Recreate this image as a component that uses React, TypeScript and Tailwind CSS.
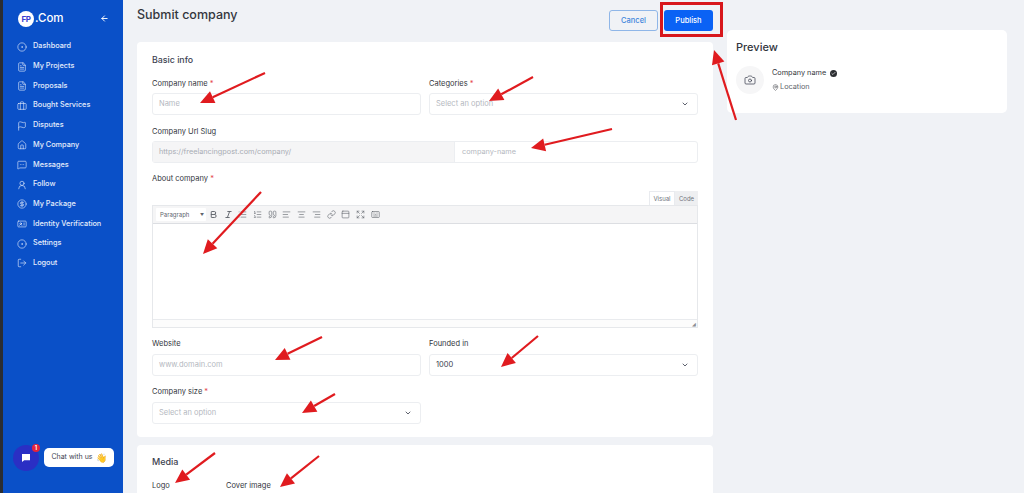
import {
  AlignCenter,
  AlignLeft,
  AlignRight,
  ArrowLeft,
  Bold,
  Briefcase,
  Camera,
  ChevronDown,
  Expand,
  FileText,
  Flag,
  House,
  Italic,
  Keyboard,
  Link,
  List,
  ListOrdered,
  LogOut,
  MapPin,
  MessageSquareMore,
  PanelTop,
  Quote,
  CircleDollarSign,
  CircleDot,
  UserRound,
  IdCard,
  Check,
} from "lucide-react";

const navItems = [
  { label: "Dashboard", icon: CircleDot },
  { label: "My Projects", icon: FileText },
  { label: "Proposals", icon: FileText },
  { label: "Bought Services", icon: Briefcase },
  { label: "Disputes", icon: Flag },
  { label: "My Company", icon: House },
  { label: "Messages", icon: MessageSquareMore },
  { label: "Follow", icon: UserRound },
  { label: "My Package", icon: CircleDollarSign },
  { label: "Identity Verification", icon: IdCard },
  { label: "Settings", icon: CircleDot },
  { label: "Logout", icon: LogOut },
];

const toolbarIcons = [Bold, Italic, List, ListOrdered, Quote, AlignLeft, AlignCenter, AlignRight, Link, PanelTop, Expand, Keyboard];

// red annotation arrows drawn over the screenshot: [tail x, tail y, tip x, tip y]
const arrows = [
  [265, 73, 200, 103],
  [533, 77, 489, 101],
  [612, 129, 531, 148],
  [261, 192, 203, 254],
  [322, 337, 275, 360],
  [538, 336, 501, 367],
  [335, 394, 302, 413],
  [215, 453, 175, 483],
  [319, 456, 280, 487],
  [736, 120, 714, 50],
];

function Arrow({ from }: { from: number[] }) {
  const [x1, y1, x2, y2] = from;
  const len = Math.hypot(x2 - x1, y2 - y1);
  const ux = (x2 - x1) / len;
  const uy = (y2 - y1) / len;
  const bx = x2 - ux * 14;
  const by = y2 - uy * 14;
  const points = `${x2},${y2} ${bx - uy * 6.5},${by + ux * 6.5} ${bx + uy * 6.5},${by - ux * 6.5}`;
  return (
    <g>
      <line x1={x1} y1={y1} x2={bx} y2={by} stroke="#e01b1f" strokeWidth="2.2" />
      <polygon points={points} fill="#e01b1f" />
    </g>
  );
}

function Label({ text, required }: { text: string; required?: boolean }) {
  return (
    <div className="text-[7.5px] leading-[10px] font-normal text-[#33363d]">
      {text}
      {required && <span className="text-[#e5484d]"> *</span>}
    </div>
  );
}

function Field({ placeholder, value, select }: { placeholder?: string; value?: string; select?: boolean }) {
  return (
    <div className="flex h-[22px] items-center justify-between rounded-[3px] border border-[#eceef1] bg-white pr-2 pl-[6px] text-[7.5px]">
      <span className={value ? "text-[#3d4250]" : "text-[#b4b8c0]"}>{value || placeholder}</span>
      {select && <ChevronDown size={8} strokeWidth={2.5} className="text-[#3d4250]" />}
    </div>
  );
}

export default function App() {
  return (
    <div className="relative flex h-[493px] w-[1024px] overflow-hidden bg-[#f0f2f6] font-['Inter',sans-serif]">
      <div className="w-[3px] bg-[#2b2d31]" />

      <aside className="w-[120px] shrink-0 bg-[#0a50c8] text-white">
        <div className="flex h-[37px] items-center pr-[14px] pl-[15px]">
          <div className="flex h-4 w-4 items-center justify-center rounded-full bg-white text-[8px] font-bold tracking-tighter text-[#3a3fd0]">
            FP
          </div>
          <span className="ml-[1px] text-[11.5px] font-medium">.Com</span>
          <ArrowLeft size={9} strokeWidth={2.5} className="ml-auto" />
        </div>
        <nav className="flex flex-col">
          {navItems.map((item) => (
            <div key={item.label} className="flex h-[19.7px] items-center pl-[14px] text-[7.3px] font-medium text-[#e4ecfb]">
              <item.icon size={10} strokeWidth={1.5} />
              <span className="ml-[6px]">{item.label}</span>
            </div>
          ))}
        </nav>
      </aside>

      <main className="flex min-w-0 flex-1 pl-[14px]">
        <div className="w-[576px] shrink-0">
          <div className="flex h-[42px] justify-between">
            <h1 className="pt-[5px] text-[12.5px] leading-[20px] font-medium text-[#33363d]">Submit company</h1>
            <div className="flex gap-[6px] pt-[10px]">
              <button className="h-[21px] w-[49px] rounded-[3px] border border-[#8fb6e8] text-[7.5px] font-medium text-[#3f86dc]">Cancel</button>
              <button className="h-[21px] w-[49px] rounded-[3px] bg-[#0a62f5] text-[7.5px] font-medium text-white">Publish</button>
            </div>
          </div>

          <section className="h-[395px] rounded-[4px] bg-white px-[15px] pt-[12px]">
            <h2 className="text-[8.8px] leading-[11px] font-medium text-[#3d4250]">Basic info</h2>

            <div className="mt-[14px] grid grid-cols-[269px_269px] gap-x-2">
              <div>
                <Label text="Company name" required />
                <div className="mt-[4px]"><Field placeholder="Name" /></div>
              </div>
              <div>
                <Label text="Categories" required />
                <div className="mt-[4px]"><Field placeholder="Select an option" select /></div>
              </div>
            </div>

            <div className="mt-[12px] w-[546px]">
              <Label text="Company Url Slug" />
              <div className="mt-[4px] flex h-[22px] rounded-[3px] border border-[#eceef1] text-[7.3px]">
                <div className="flex w-[301px] items-center bg-[#f5f5f6] pl-[6px] text-[#a8acb4]">https://freelancingpost.com/company/</div>
                <div className="flex flex-1 items-center border-l border-[#eceef1] pl-[7px] text-[#b4b8c0]">company-name</div>
              </div>
            </div>

            <div className="mt-[11px] w-[546px]">
              <Label text="About company" required />
              <div className="flex h-[21px] items-end justify-end text-[6px] text-[#70747c]">
                <div className="flex h-[14px] w-[26px] items-center justify-center border border-b-0 border-[#e9ebef] bg-white">Visual</div>
                <div className="flex h-[14px] w-[23px] items-center justify-center bg-[#eeeff1]">Code</div>
              </div>
              <div className="border border-[#e6e8eb]">
                <div className="flex h-[18px] items-center border-b border-[#dcdee2] bg-[#f5f5f6] pl-[3px]">
                  <div className="flex h-[13px] w-[50px] items-center justify-between rounded-[1px] bg-white pr-[2px] pl-[4px] text-[6px] text-[#60646c]">
                    Paragraph
                    <span className="text-[4px]">▼</span>
                  </div>
                  <div className="ml-[3px] flex gap-[5.7px]">
                    {toolbarIcons.map((Icon, i) => (
                      <Icon key={i} size={9} strokeWidth={i < 2 ? 2.5 : 1.6} className="text-[#60646c]" />
                    ))}
                  </div>
                </div>
                <div className="h-[95px] bg-white" />
                <div className="flex h-[8px] items-end justify-end border-t border-[#e9ebee] bg-[#fcfcfc] pr-[1px] text-[5px] leading-[6px] text-[#8a8d93]">◢</div>
              </div>
            </div>

            <div className="mt-[11px] grid grid-cols-[269px_269px] gap-x-2">
              <div>
                <Label text="Website" />
                <div className="mt-[5px]"><Field placeholder="www.domain.com" /></div>
              </div>
              <div>
                <Label text="Founded in" />
                <div className="mt-[5px]"><Field value="1000" select /></div>
              </div>
            </div>

            <div className="mt-[11px] w-[269px]">
              <Label text="Company size" required />
              <div className="mt-[5px]"><Field placeholder="Select an option" select /></div>
            </div>
          </section>

          <section className="mt-[8px] h-[60px] rounded-[4px] bg-white px-[15px] pt-[11px]">
            <h2 className="text-[9px] leading-[12px] font-medium text-[#3d4250]">Media</h2>
            <div className="mt-[13px] flex">
              <div className="w-[74px]"><Label text="Logo" /></div>
              <Label text="Cover image" />
            </div>
          </section>
        </div>

        <div className="ml-[14px] w-[280px] pt-[30px]">
          <div className="h-[83px] rounded-[5px] bg-white pt-[10px] pl-[9px]">
            <h2 className="text-[11px] leading-[14px] font-medium text-[#33363d]">Preview</h2>
            <div className="mt-[12px] flex items-center">
              <div className="flex h-[28px] w-[28px] items-center justify-center rounded-full bg-[#f6f6f7]">
                <Camera size={12} strokeWidth={1.5} className="text-[#3d4250]" />
              </div>
              <div className="ml-[8px]">
                <div className="flex items-center text-[7.3px] leading-[10px] font-normal text-[#33363d]">
                  Company name
                  <span className="ml-[4px] flex h-[7px] w-[7px] items-center justify-center rounded-full bg-[#2b2d31]">
                    <Check size={5} strokeWidth={3} className="text-white" />
                  </span>
                </div>
                <div className="mt-[4px] flex items-center text-[7.3px] leading-[10px] text-[#60646c]">
                  <MapPin size={7} strokeWidth={1.6} className="mr-[1px] text-[#33363d]" />
                  Location
                </div>
              </div>
            </div>
          </div>
        </div>
      </main>

      {/* chat widget */}
      <div className="absolute top-[445px] left-[13px] flex h-[26px] w-[26px] items-center justify-center rounded-full bg-[#2a2fc4]">
        <svg width="10" height="10" viewBox="0 0 10 10" fill="white"><path d="M1 1h8v6.2H3.2L1 9z" /></svg>
      </div>
      <div className="absolute top-[444px] left-[32px] flex h-[8px] w-[8px] items-center justify-center rounded-full bg-[#e5243b] text-[5.5px] font-bold text-white">1</div>
      <div className="absolute top-[448px] left-[44px] flex h-[19px] w-[70px] items-center justify-center rounded-[5px] bg-white text-[7px] text-[#3d4250]">
        Chat with us
        <span className="ml-[3px] text-[9px] leading-none">👋</span>
      </div>

      {/* red box round the publish button */}
      <div className="absolute top-[2px] left-[660px] h-[35px] w-[63px] border-[3px] border-[#d8171c]" />

      {/* annotation arrows */}
      <svg className="absolute inset-0" width="1024" height="493" viewBox="0 0 1024 493">
        {arrows.map((a, i) => (
          <Arrow key={i} from={a} />
        ))}
      </svg>
    </div>
  );
}
